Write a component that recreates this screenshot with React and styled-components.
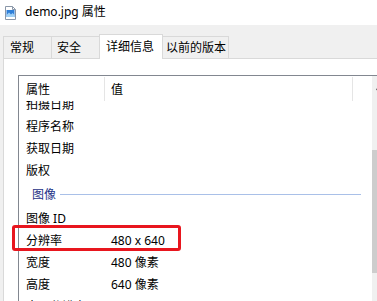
import React from 'react';
import styled, { createGlobalStyle } from 'styled-components';

const GlobalStyle = createGlobalStyle`
  html, body {
    margin: 0;
    padding: 0;
    background: #fff;
    overflow: hidden;
  }
  body {
    font-family: 'Noto Sans', 'Noto Sans CJK SC', sans-serif;
    font-size: 12px;
    color: #000;
  }
`

const Window = styled.div`
  position: relative;
  width: 377px;
  height: 301px;
  display: flex;
  flex-direction: column;
  overflow: hidden;
`
const TitleBar = styled.div`
  height: 25px;
  flex: none;
  display: flex;
  align-items: center;
  gap: 9px;
  padding-left: 5px;
  background: #fff;
  line-height: 1;
`
const TitleText = styled.span`
  margin-top: -1px;
`
const Body = styled.div`
  flex: 1;
  display: flex;
  flex-direction: column;
  background: #f0f0f0;
  padding: 9px 0 0 3px;
  min-height: 0;
`
const TabStrip = styled.div`
  height: 25px;
  flex: none;
  display: flex;
  align-items: flex-start;
  margin-bottom: -1px;
  position: relative;
  z-index: 1;
`
const Tab = styled.div`
  box-sizing: border-box;
  width: ${p => p.w}px;
  height: ${p => (p.active ? 25 : 22)}px;
  margin-top: ${p => (p.active ? 0 : 2)}px;
  margin-left: ${p => (p.first ? 0 : -1)}px;
  padding-left: ${p => p.pad}px;
  border: 1px solid #d9d9d9;
  border-bottom: none;
  background: ${p => (p.active ? '#fff' : '#f0f0f0')};
  position: relative;
  z-index: ${p => (p.active ? 2 : 1)};
  display: flex;
  align-items: ${p => (p.active ? 'flex-start' : 'center')};
  padding-top: ${p => (p.active ? 3 : 0)}px;
  white-space: nowrap;
  line-height: 18px;
`
const Panel = styled.div`
  flex: 1;
  display: flex;
  flex-direction: column;
  background: #fff;
  border-top: 1px solid #d9d9d9;
  border-left: 1px solid #d9d9d9;
  padding: 16px 0 0 14px;
  min-height: 0;
`
const ListView = styled.div`
  width: 370px;
  flex: 1;
  display: flex;
  border-top: 1px solid #828790;
  border-left: 1px solid #828790;
  min-height: 0;
  background: #fff;
`
const ListMain = styled.div`
  flex: 1;
  display: flex;
  flex-direction: column;
  min-width: 0;
`
const Header = styled.div`
  height: 25px;
  flex: none;
  display: grid;
  grid-template-columns: 86px 248px;
  align-items: stretch;
`
const HeaderCell = styled.div`
  display: flex;
  align-items: center;
  padding-left: ${p => p.pad}px;
  border-right: 1px solid #e5e5e5;
  margin-top: 1px;
`
const Rows = styled.div`
  flex: 1;
  overflow: hidden;
  min-height: 0;
`
const RowsInner = styled.div`
  margin-top: -8px;
`
const Row = styled.div`
  height: 22px;
  display: grid;
  grid-template-columns: 86px 1fr;
  align-items: center;
  white-space: nowrap;
`
const NameCell = styled.div`
  padding-left: 7px;
`
const ValueCell = styled.div`
  padding-left: 6px;
`
const GroupRow = styled.div`
  height: 26px;
  display: flex;
  align-items: center;
  gap: 4px;
  padding-left: 13px;
  margin-right: 11px;
  color: #1e3287;
`
const GroupLine = styled.div`
  flex: 1;
  height: 1px;
  background: #a9c0e8;
  margin-top: 1px;
`
const ScrollBar = styled.div`
  width: 17px;
  flex: none;
  display: flex;
  flex-direction: column;
  background: #f0f0f0;
`
const ScrollButton = styled.div`
  height: 17px;
  display: flex;
  align-items: center;
  justify-content: center;
  padding-top: 3px;
`
const ScrollThumb = styled.div`
  margin: 54px 0 0 0;
  height: 123px;
  background: #cdcdcd;
`
const Highlight = styled.div`
  position: absolute;
  left: 12px;
  top: 225px;
  width: 169px;
  height: 26px;
  box-sizing: border-box;
  border: 3px solid #e8161e;
  border-radius: 3px;
  pointer-events: none;
`

const FileIcon = () => (
  <svg width="11" height="14" viewBox="0 0 11 14">
    <path d="M0.5 0.5 H7.5 L10.5 3.5 V13.5 H0.5 Z" fill="#fff" stroke="#8a97a8" />
    <rect x="1.5" y="4" width="8" height="7" fill="#2f7fd8" />
    <path d="M1.5 9 L4 6.5 L6 8.5 L7.5 7 L9.5 9 V11 H1.5 Z" fill="#9fd0f5" />
    <path d="M7.5 0.5 V3.5 H10.5" fill="none" stroke="#8a97a8" />
  </svg>
)

const UpArrow = () => (
  <svg width="9" height="6" viewBox="0 0 9 6">
    <path d="M0.5 5 L4.5 1 L8.5 5" fill="none" stroke="#606060" strokeWidth="1.6" />
  </svg>
)

const tabs = [
  { label: '常规', w: 49, pad: 6 },
  { label: '安全', w: 49, pad: 5 },
  { label: '详细信息', w: 64, pad: 6, active: true },
  { label: '以前的版本', w: 67, pad: 3 },
]

const before = [
  ['拍摄日期', ''],
  ['程序名称', ''],
  ['获取日期', ''],
  ['版权', ''],
]
const after = [
  ['图像 ID', ''],
  ['分辨率', '480 x 640'],
  ['宽度', '480 像素'],
  ['高度', '640 像素'],
  ['水平分辨率', '96 dpi'],
]

const App = () => (
  <Window>
    <GlobalStyle />
    <TitleBar>
      <FileIcon />
      <TitleText>demo.jpg 属性</TitleText>
    </TitleBar>
    <Body>
      <TabStrip>
        {tabs.map((t, i) => (
          <Tab key={t.label} first={i === 0} w={t.w} pad={t.pad} active={t.active}>
            {t.label}
          </Tab>
        ))}
      </TabStrip>
      <Panel>
        <ListView>
          <ListMain>
            <Header>
              <HeaderCell pad={7}>属性</HeaderCell>
              <HeaderCell pad={6}>值</HeaderCell>
            </Header>
            <Rows>
              <RowsInner>
                {before.map(([n, v]) => (
                  <Row key={n}>
                    <NameCell>{n}</NameCell>
                    <ValueCell>{v}</ValueCell>
                  </Row>
                ))}
                <GroupRow>
                  图像
                  <GroupLine />
                </GroupRow>
                {after.map(([n, v]) => (
                  <Row key={n}>
                    <NameCell>{n}</NameCell>
                    <ValueCell>{v}</ValueCell>
                  </Row>
                ))}
              </RowsInner>
            </Rows>
          </ListMain>
          <ScrollBar>
            <ScrollButton>
              <UpArrow />
            </ScrollButton>
            <ScrollThumb />
          </ScrollBar>
        </ListView>
      </Panel>
    </Body>
    <Highlight />
  </Window>
)

export default App;
